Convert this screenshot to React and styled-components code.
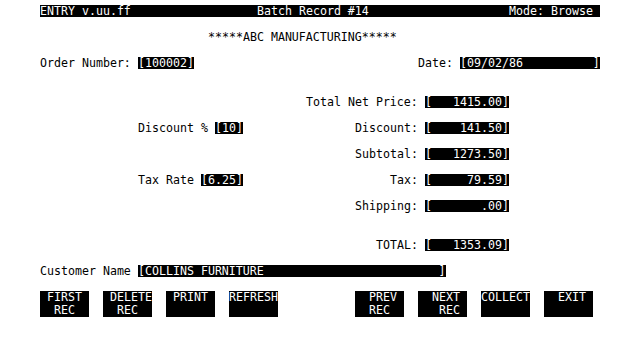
import React from 'react';
import styled, { createGlobalStyle } from 'styled-components';

const GlobalStyle = createGlobalStyle`
  html, body {
    margin: 0;
    padding: 0;
    background: #fff;
  }
`;

// one cell of the terminal is 7px wide and 13px high, 80 columns
const Screen = styled.div`
  display: flex;
  flex-direction: column;
  width: 560px;
  padding: 5px 0 0 40px;
  font-family: 'DejaVu Sans Mono', 'Liberation Mono', monospace;
  font-size: 11.627px;
  color: #000;
`;

const Line = styled.div`
  display: grid;
  grid-template-columns: repeat(80, 7px);
  height: ${({ $rows = 1 }) => $rows * 13}px;
`;

const TitleLine = styled(Line)`
  height: 12px;
  margin-bottom: 1px;
  background: #000;
  color: #fff;
`;

const Blank = styled.div`
  height: ${({ $rows = 1 }) => $rows * 13}px;
`;

const LabelText = styled.span`
  grid-column: ${({ $col }) => $col + 1} / span ${({ $span }) => $span};
  height: 12px;
  line-height: 12px;
  white-space: pre;
`;

const FieldBox = styled(LabelText)`
  background: #000;
  color: #fff;
  overflow: hidden;
`;

const KeyButton = styled.div`
  grid-column: ${({ $col }) => $col + 1} / span 7;
  height: 26px;
  background: #000;
  color: #fff;
  line-height: 13px;
  white-space: pre;
  overflow: hidden;
`;

const Label = ({ col, children }) => (
  <LabelText $col={col} $span={children.length}>
    {children}
  </LabelText>
);

const Field = ({ col, children }) => (
  <FieldBox $col={col} $span={children.length}>
    {children}
  </FieldBox>
);

const AmountLine = ({ label, value, children }) => (
  <Line>
    {children}
    <Label col={55 - label.length}>{label}</Label>
    <Field col={55}>{`[${value.padStart(10, ' ')}]`}</Field>
  </Line>
);

const keys = [
  { col: 0, top: ' FIRST', bottom: '  REC' },
  { col: 9, top: ' DELETE', bottom: '  REC' },
  { col: 18, top: ' PRINT', bottom: '' },
  { col: 27, top: 'REFRESH', bottom: '' },
  { col: 45, top: '  PREV', bottom: '  REC' },
  { col: 54, top: '  NEXT', bottom: '   REC' },
  { col: 63, top: 'COLLECT', bottom: '' },
  { col: 72, top: '  EXIT', bottom: '' },
];

const App = () => (
  <>
    <GlobalStyle />
    <Screen>
      <TitleLine>
        <Label col={0}>ENTRY v.uu.ff</Label>
        <Label col={31}>Batch Record #14</Label>
        <Label col={67}>Mode: Browse</Label>
      </TitleLine>
      <Blank />
      <Line>
        <Label col={24}>*****ABC MANUFACTURING*****</Label>
      </Line>
      <Blank />
      <Line>
        <Label col={0}>Order Number:</Label>
        <Field col={14}>[100002]</Field>
        <Label col={54}>Date:</Label>
        <Field col={60}>{'[09/02/86'.padEnd(19, ' ') + ']'}</Field>
      </Line>
      <Blank $rows={2} />
      <AmountLine label="Total Net Price: " value="1415.00" />
      <Blank />
      <AmountLine label="Discount: " value="141.50">
        <Label col={14}>Discount %</Label>
        <Field col={25}>[10]</Field>
      </AmountLine>
      <Blank />
      <AmountLine label="Subtotal: " value="1273.50" />
      <Blank />
      <AmountLine label="Tax: " value="79.59">
        <Label col={14}>Tax Rate</Label>
        <Field col={23}>[6.25]</Field>
      </AmountLine>
      <Blank />
      <AmountLine label="Shipping: " value=".00" />
      <Blank $rows={2} />
      <AmountLine label="TOTAL: " value="1353.09" />
      <Blank />
      <Line>
        <Label col={0}>Customer Name</Label>
        <Field col={14}>{'[COLLINS FURNITURE'.padEnd(43, ' ') + ']'}</Field>
      </Line>
      <Blank />
      <Line $rows={2}>
        {keys.map((k) => (
          <KeyButton key={k.col} $col={k.col}>
            {k.top}
            {'\n'}
            {k.bottom}
          </KeyButton>
        ))}
      </Line>
    </Screen>
  </>
);

export default App;
